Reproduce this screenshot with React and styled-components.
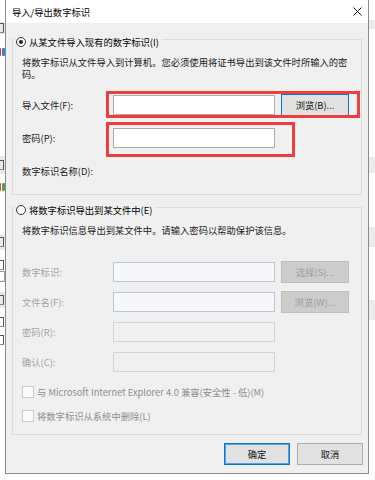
import styled, { createGlobalStyle } from "styled-components";

const GlobalStyle = createGlobalStyle`
  body {
    margin: 0;
    background: #ffffff;
    font-family: "Noto Sans CJK SC", "Noto Sans", sans-serif;
    font-size: 9.3px;
    line-height: 12px;
    color: #111;
  }
`;

// bits of the window behind the dialog, peeking out on the left
const leftBits = [
  { h: 22, bg: "#fff" },
  { h: 12, bg: "#e9e9e9", mark: true },
  { h: 12, bg: "#fff" },
  { h: 12, bg: "#fff", icon: ["#d23a2a", "#3d7fd6"] },
  { h: 98, bg: "#fff" },
  { h: 18, bg: "#e9e9e9", mark: true },
  { h: 6, bg: "#fff" },
  { h: 14, bg: "#fff", icon: ["#d9442c", "#5aa04a"] },
  { h: 40, bg: "#fff" },
  { h: 16, bg: "#e9e9e9", mark: true },
  { h: 10, bg: "#fff" },
  { h: 10, bg: "#fff", mark: true },
  { h: 12, bg: "#fff", box: true },
  { h: 10, bg: "#fff" },
  { h: 16, bg: "#e9e9e9", mark: true },
  { h: 8, bg: "#fff" },
  { h: 12, bg: "#fff", mark: true },
  { h: 6, bg: "#fff" },
  { h: 12, bg: "#fff", mark: true },
];

const rightBands = [
  { h: 20, bg: "#fff" },
  { h: 9, bg: "#ececec" },
  { h: 128, bg: "#fff" },
  { h: 16, bg: "#ececec" },
  { h: 54, bg: "#fff" },
  { h: 20, bg: "#ececec" },
  { h: 53, bg: "#fff" },
  { h: 20, bg: "#ececec" },
];

const App = () => {
  return (
    <Desktop>
      <GlobalStyle />
      <SideStrip $w={5}>
        {leftBits.map((b, i) => (
          <Fragment key={i} $h={b.h} $bg={b.bg}>
            {b.mark && <GlyphBit />}
            {b.icon && (
              <>
                <IconDot $c={b.icon[0]} />
                <IconDot $c={b.icon[1]} />
              </>
            )}
            {b.box && <TinyBox />}
          </Fragment>
        ))}
      </SideStrip>

      <Dialog>
        <TitleBar>
          <Title>导入/导出数字标识</Title>
          <CloseButton>
            <svg width="9" height="9" viewBox="0 0 9 9">
              <path d="M0.5 0.5 L8.5 8.5 M8.5 0.5 L0.5 8.5" stroke="#111" strokeWidth="1" />
            </svg>
          </CloseButton>
        </TitleBar>

        <Body>
          <Group $top={16}>
            <Legend>
              <Radio $checked />
              从某文件导入现有的数字标识(I)
            </Legend>
            <Desc>
              将数字标识从文件导入到计算机。您必须使用将证书导出到该文件时所输入的密
              <br />
              码。
            </Desc>
            <Rows $gap={11} $top={14}>
              <FieldRow>
                <Label>导入文件(F):</Label>
                <TextBox />
                <PushButton $hot>浏览(B)...</PushButton>
              </FieldRow>
              <FieldRow>
                <Label>密码(P):</Label>
                <TextBox />
              </FieldRow>
              <FieldRow>
                <Label>数字标识名称(D):</Label>
              </FieldRow>
            </Rows>
          </Group>

          <Group $top={12}>
            <Legend>
              <Radio />
              将数字标识导出到某文件中(E)
            </Legend>
            <Desc>将数字标识信息导出到某文件中。请输入密码以帮助保护该信息。</Desc>
            <Rows $gap={8} $top={25}>
              <FieldRow>
                <Label $off>数字标识:</Label>
                <TextBox $off $tint />
                <PushButton $off>选择(S)...</PushButton>
              </FieldRow>
              <FieldRow>
                <Label $off>文件名(F):</Label>
                <TextBox $off $tint />
                <PushButton $off>浏览(W)...</PushButton>
              </FieldRow>
              <FieldRow>
                <Label $off>密码(R):</Label>
                <TextBox $off />
              </FieldRow>
              <FieldRow>
                <Label $off>确认(C):</Label>
                <TextBox $off />
              </FieldRow>
            </Rows>
            <Rows $gap={12} $top={13}>
              <CheckRow>
                <CheckBox />
                与 Microsoft Internet Explorer 4.0 兼容(安全性 - 低)(M)
              </CheckRow>
              <CheckRow>
                <CheckBox />
                将数字标识从系统中删除(L)
              </CheckRow>
            </Rows>
          </Group>
        </Body>

        <Footer>
          <DialogButton $default>确定</DialogButton>
          <DialogButton>取消</DialogButton>
        </Footer>
      </Dialog>

      <SideStrip $w={6}>
        {rightBands.map((b, i) => (
          <Fragment key={i} $h={b.h} $bg={b.bg} />
        ))}
      </SideStrip>

      <Marker $x={106} $y={91} $w={254} $h={27} />
      <Marker $x={106} $y={122} $w={189} $h={35} />
    </Desktop>
  );
};

export default App;

const Desktop = styled.div`
  position: relative;
  width: 375px;
  height: 480px;
  display: flex;
  align-items: flex-start;
  overflow: hidden;
  background: #fff;
`;

const SideStrip = styled.div`
  width: ${(p) => p.$w}px;
  flex: none;
  display: flex;
  flex-direction: column;
  overflow: hidden;
`;

const Fragment = styled.div`
  height: ${(p) => p.$h}px;
  background: ${(p) => p.$bg};
  display: flex;
  justify-content: flex-end;
  align-items: center;
  gap: 1px;
`;

const GlyphBit = styled.span`
  display: block;
  flex: none;
  width: 3px;
  height: 8px;
  margin-right: 1px;
  border-top: 1px solid #555;
  border-right: 1px solid #555;
  border-bottom: 1px solid #888;
`;

const IconDot = styled.span`
  display: block;
  width: 3px;
  height: 8px;
  flex: none;
  background: ${(p) => p.$c};
  border-radius: 1px;
`;

const TinyBox = styled.span`
  display: block;
  flex: none;
  width: 8px;
  height: 9px;
  border: 1px solid #999;
  background: #fff;
`;

const Dialog = styled.div`
  width: 364px;
  height: 474px;
  flex: none;
  box-sizing: border-box;
  border: 1px solid #8a8a8a;
  border-top: none;
  background: #f0f0f0;
  display: flex;
  flex-direction: column;
`;

const TitleBar = styled.div`
  height: 23px;
  background: #fff;
  display: flex;
  align-items: center;
  justify-content: space-between;
  padding: 0 5px 0 6px;
`;

const Title = styled.div`
  color: #000;
`;

const CloseButton = styled.div`
  width: 9px;
  height: 9px;
  display: flex;
  margin-right: 1px;
  svg {
    display: block;
  }
`;

const Body = styled.div`
  padding: 0 6px;
  display: flex;
  flex-direction: column;
`;

const Group = styled.div`
  position: relative;
  margin-top: ${(p) => p.$top}px;
  border: 1px solid #dcdcdc;
  padding: 16px 9px 12px 9px;
  display: flex;
  flex-direction: column;
`;

const Legend = styled.div`
  position: absolute;
  top: -4px;
  left: 1px;
  display: flex;
  align-items: center;
  gap: 3px;
  padding: 0 3px 0 2px;
  background: #f0f0f0;
  color: #000;
`;

const Radio = styled.span`
  position: relative;
  width: 10px;
  height: 10px;
  box-sizing: border-box;
  border: 1px solid #333;
  border-radius: 50%;
  background: #fff;
  &::after {
    content: "";
    display: ${(p) => (p.$checked ? "block" : "none")};
    position: absolute;
    left: 2px;
    top: 2px;
    width: 4px;
    height: 4px;
    border-radius: 50%;
    background: #222;
  }
`;

const Desc = styled.div`
  color: #1a1a1a;
`;

const Rows = styled.div`
  display: flex;
  flex-direction: column;
  gap: ${(p) => p.$gap}px;
  margin-top: ${(p) => p.$top}px;
`;

const FieldRow = styled.div`
  height: 22px;
  display: flex;
  align-items: center;
  gap: 6px;
`;

const Label = styled.div`
  width: 91px;
  margin-right: -6px;
  color: ${(p) => (p.$off ? "#a3a3a3" : "#1a1a1a")};
`;

const TextBox = styled.div`
  width: 162px;
  height: 20px;
  box-sizing: border-box;
  border: 1px solid ${(p) => (p.$off ? (p.$tint ? "#b4c8e2" : "#d4d4d4") : "#acacac")};
  background: ${(p) => (p.$off ? (p.$tint ? "#f7f7f7" : "#f0f0f0") : "#fff")};
`;

const PushButton = styled.div`
  width: 68px;
  height: 22px;
  box-sizing: border-box;
  display: flex;
  align-items: center;
  justify-content: center;
  border: 1px solid ${(p) => (p.$hot ? "#0078d7" : "#bfbfbf")};
  background: ${(p) => (p.$off ? "#cccccc" : "#e1e1e1")};
  color: ${(p) => (p.$off ? "#9c9c9c" : "#111")};
`;

const CheckRow = styled.div`
  height: 12px;
  display: flex;
  align-items: center;
  gap: 3px;
  color: #8e8e8e;
`;

const CheckBox = styled.span`
  width: 12px;
  height: 12px;
  box-sizing: border-box;
  border: 1px solid #cccccc;
  background: #fafafa;
`;

const Footer = styled.div`
  display: flex;
  justify-content: flex-end;
  gap: 7px;
  padding: 8px 5px 0 0;
`;

const DialogButton = styled.div`
  width: 66px;
  height: 22px;
  box-sizing: border-box;
  display: flex;
  align-items: center;
  justify-content: center;
  background: #e1e1e1;
  border: 1px solid ${(p) => (p.$default ? "#0078d7" : "#adadad")};
  box-shadow: ${(p) => (p.$default ? "inset 0 0 0 1px #5aa2e0" : "none")};
  color: #111;
`;

const Marker = styled.div`
  position: absolute;
  left: ${(p) => p.$x}px;
  top: ${(p) => p.$y}px;
  width: ${(p) => p.$w}px;
  height: ${(p) => p.$h}px;
  box-sizing: border-box;
  border: 3px solid #f03c3c;
  pointer-events: none;
`;
